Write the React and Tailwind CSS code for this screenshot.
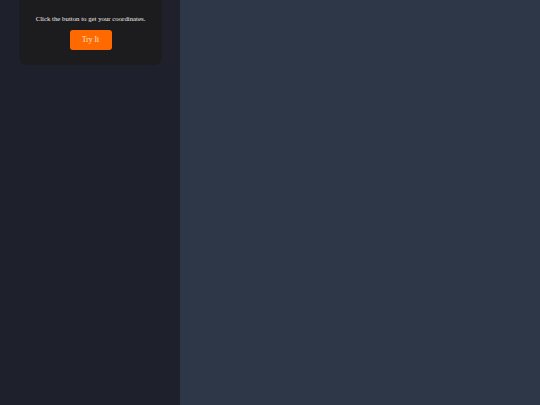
const App = () => {
  return (
    <div className="flex w-[540px] h-[405px] font-['Liberation_Serif',serif]">
      <aside className="w-[180px] h-full bg-[#1e212c] px-[19px]">
        <div className="-mt-2 pt-[23px] pb-[15px] w-[143px] bg-[#1c1c1e] rounded-lg flex flex-col items-center">
          <p className="text-[6.8px] leading-[8px] text-[#ececec]">
            Click the button to get your coordinates.
          </p>
          <button className="mt-[7px] w-[42px] h-[20px] rounded-[3px] bg-[#ff6a00] text-[7.5px] text-[#fde8d8]">
            Try It
          </button>
        </div>
      </aside>
      <main className="flex-1 h-full bg-[#2d3748]" />
    </div>
  );
};

export default App;
